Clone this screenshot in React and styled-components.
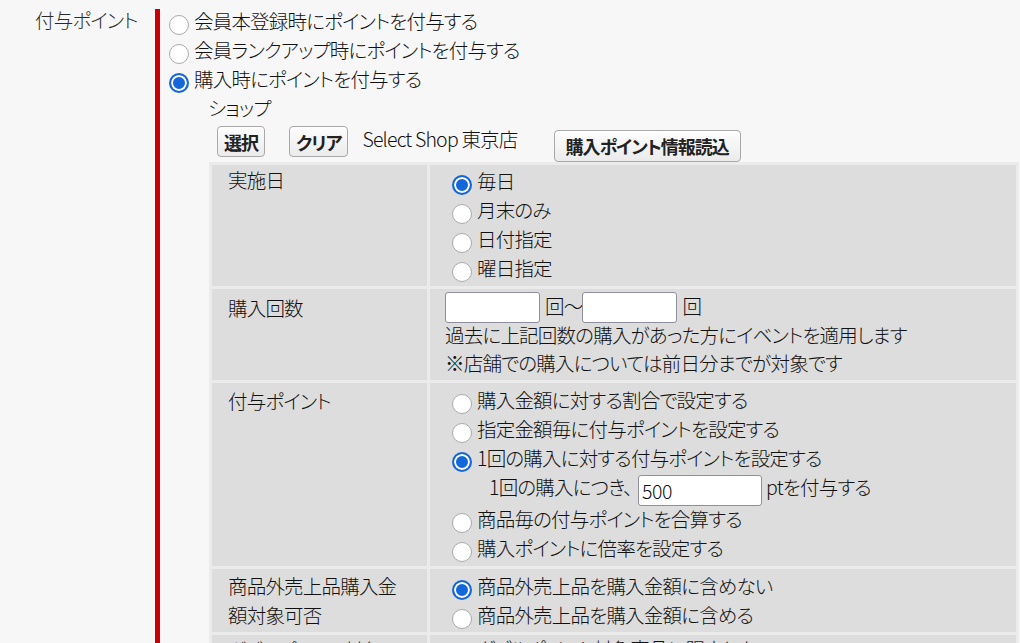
import React from "react";
import styled, { createGlobalStyle } from "styled-components";

const GlobalStyle = createGlobalStyle`
  html, body {
    margin: 0;
    padding: 0;
    overflow: hidden;
    background: #f7f7f7;
  }
  body {
    font-family: "Noto Sans CJK JP", "Noto Sans", sans-serif;
    font-size: 19.5px;
    font-weight: 300;
    letter-spacing: -0.8px;
    color: #111;
    font-feature-settings: "palt";
  }
`;

const Page = styled.div`
  display: flex;
  align-items: flex-start;
`;

const FieldLabel = styled.div`
  flex: none;
  width: 155px;
  box-sizing: border-box;
  padding: 8px 0 0 35px;
  line-height: 23px;
  color: #2a2a2a;
`;

const FieldBody = styled.div`
  flex: 1;
  margin-top: 9px;
  border-left: 5px solid #cc0000;
  padding-left: 2px;
`;

const RadioLine = styled.label`
  display: flex;
  align-items: flex-start;
  height: 29px;
`;

const Radio = styled.input.attrs({ type: "radio" })`
  appearance: none;
  -webkit-appearance: none;
  flex: none;
  box-sizing: border-box;
  width: 20px;
  height: 20px;
  margin: 6px 5px 0 7px;
  border-radius: 50%;
  border: 1.5px solid #aaaaaa;
  background: #fff;
  &:checked {
    border: 2px solid #1466db;
    background: #1466db;
    box-shadow: inset 0 0 0 2px #fff;
  }
`;

const Text = styled.span`
  line-height: 23px;
  white-space: nowrap;
`;

const ShopSection = styled.div`
  margin-left: 46px;
`;

const SubTitle = styled.div`
  line-height: 23px;
  padding-bottom: 7px;
`;

const ButtonRow = styled.div`
  display: flex;
  align-items: flex-start;
  padding-left: 9px;
`;

const Button = styled.button`
  flex: none;
  box-sizing: border-box;
  height: ${(p) => (p.$wide ? 32 : 31)}px;
  margin: ${(p) => (p.$wide ? "4px 0 0 0" : "0")};
  padding: 0 ${(p) => (p.$wide ? 11 : 6)}px;
  font-family: inherit;
  font-feature-settings: "palt";
  font-size: 18px;
  font-weight: 700;
  letter-spacing: -1px;
  color: #222;
  border: 1px solid #a9a9a9;
  border-radius: 4px;
  background: linear-gradient(#fdfdfd, #ebebeb);
  & + & {
    margin-left: 24px;
  }
`;

const ShopName = styled.span`
  line-height: 23px;
  margin: 1px 36px 0 14px;
  white-space: nowrap;
`;

const SettingsTable = styled.table`
  width: 810px;
  margin-left: 1px;
  table-layout: fixed;
  border-spacing: 3px;
  background: #ebebeb;
`;

const HeadCell = styled.th`
  width: 183px;
  padding: ${(p) => p.$pt || 0}px 16px 0;
  background: #dddddd;
  font-weight: 300;
  text-align: left;
  vertical-align: top;
  line-height: 29px;
`;

const ValueCell = styled.td`
  padding: ${(p) => p.$pt || 0}px 15px ${(p) => p.$pb || 0}px;
  background: #dddddd;
  vertical-align: top;
`;

const InputLine = styled.div`
  display: flex;
  align-items: flex-start;
`;

const TextField = styled.input.attrs({ type: "text" })`
  flex: none;
  box-sizing: border-box;
  width: ${(p) => p.$w}px;
  height: 31px;
  margin: 0 ${(p) => p.$mr || 0}px 0 ${(p) => p.$ml || 0}px;
  padding: 0 3px;
  border: 1px solid #8f8f9d;
  border-radius: 3px;
  background: #fff;
  font-family: inherit;
  font-size: 19.5px;
  font-weight: 300;
  letter-spacing: -0.5px;
  color: #111;
`;

const Unit = styled.span`
  line-height: 23px;
  margin: 2px 0 0 ${(p) => p.$ml || 0}px;
  white-space: nowrap;
`;

const NoteLine = styled.div`
  line-height: 23px;
  padding-bottom: 5px;
  white-space: nowrap;
`;

const SubLine = styled.div`
  display: flex;
  align-items: flex-start;
  height: 32px;
  padding-left: 44px;
`;

function RadioOption({ name, checked, children }) {
  return (
    <RadioLine>
      <Radio name={name} defaultChecked={checked} />
      <Text>{children}</Text>
    </RadioLine>
  );
}

export default function App() {
  return (
    <>
      <GlobalStyle />
      <Page>
        <FieldLabel>付与ポイント</FieldLabel>
        <FieldBody>
          <RadioOption name="timing">会員本登録時にポイントを付与する</RadioOption>
          <RadioOption name="timing">会員ランクアップ時にポイントを付与する</RadioOption>
          <RadioOption name="timing" checked>
            購入時にポイントを付与する
          </RadioOption>
          <ShopSection>
            <SubTitle>ショップ</SubTitle>
            <ButtonRow>
              <Button>選択</Button>
              <Button>クリア</Button>
              <ShopName>Select Shop 東京店</ShopName>
              <Button $wide>購入ポイント情報読込</Button>
            </ButtonRow>
            <SettingsTable>
              <tbody>
                <tr>
                  <HeadCell>実施日</HeadCell>
                  <ValueCell $pt={4} $pb={1}>
                    <RadioOption name="day" checked>毎日</RadioOption>
                    <RadioOption name="day">月末のみ</RadioOption>
                    <RadioOption name="day">日付指定</RadioOption>
                    <RadioOption name="day">曜日指定</RadioOption>
                  </ValueCell>
                </tr>
                <tr>
                  <HeadCell $pt={4}>購入回数</HeadCell>
                  <ValueCell $pt={3} $pb={1}>
                    <InputLine>
                      <TextField $w={95} />
                      <Unit $ml={5}>回～</Unit>
                      <TextField $w={95} />
                      <Unit $ml={5}>回</Unit>
                    </InputLine>
                    <NoteLine>過去に上記回数の購入があった方にイベントを適用します</NoteLine>
                    <NoteLine>※店舗での購入については前日分までが対象です</NoteLine>
                  </ValueCell>
                </tr>
                <tr>
                  <HeadCell $pt={3}>付与ポイント</HeadCell>
                  <ValueCell $pt={5} $pb={1}>
                    <RadioOption name="grant">購入金額に対する割合で設定する</RadioOption>
                    <RadioOption name="grant">指定金額毎に付与ポイントを設定する</RadioOption>
                    <RadioOption name="grant" checked>
                      1回の購入に対する付与ポイントを設定する
                    </RadioOption>
                    <SubLine>
                      <Text>1回の購入につき、</Text>
                      <TextField $w={124} $ml={6} $mr={4} defaultValue="500" />
                      <Text>ptを付与する</Text>
                    </SubLine>
                    <RadioOption name="grant">商品毎の付与ポイントを合算する</RadioOption>
                    <RadioOption name="grant">購入ポイントに倍率を設定する</RadioOption>
                  </ValueCell>
                </tr>
                <tr>
                  <HeadCell $pt={2}>商品外売上品購入金額対象可否</HeadCell>
                  <ValueCell $pt={5}>
                    <RadioOption name="outside" checked>
                      商品外売上品を購入金額に含めない
                    </RadioOption>
                    <RadioOption name="outside">商品外売上品を購入金額に含める</RadioOption>
                  </ValueCell>
                </tr>
                <tr>
                  <HeadCell>ダブルポイント対象</HeadCell>
                  <ValueCell $pt={2} $pb={1}>
                    <RadioOption name="double" checked>
                      ダブルポイント対象商品に限定しない
                    </RadioOption>
                    <RadioOption name="double">ダブルポイント対象商品に限定する</RadioOption>
                  </ValueCell>
                </tr>
              </tbody>
            </SettingsTable>
          </ShopSection>
        </FieldBody>
      </Page>
    </>
  );
}
